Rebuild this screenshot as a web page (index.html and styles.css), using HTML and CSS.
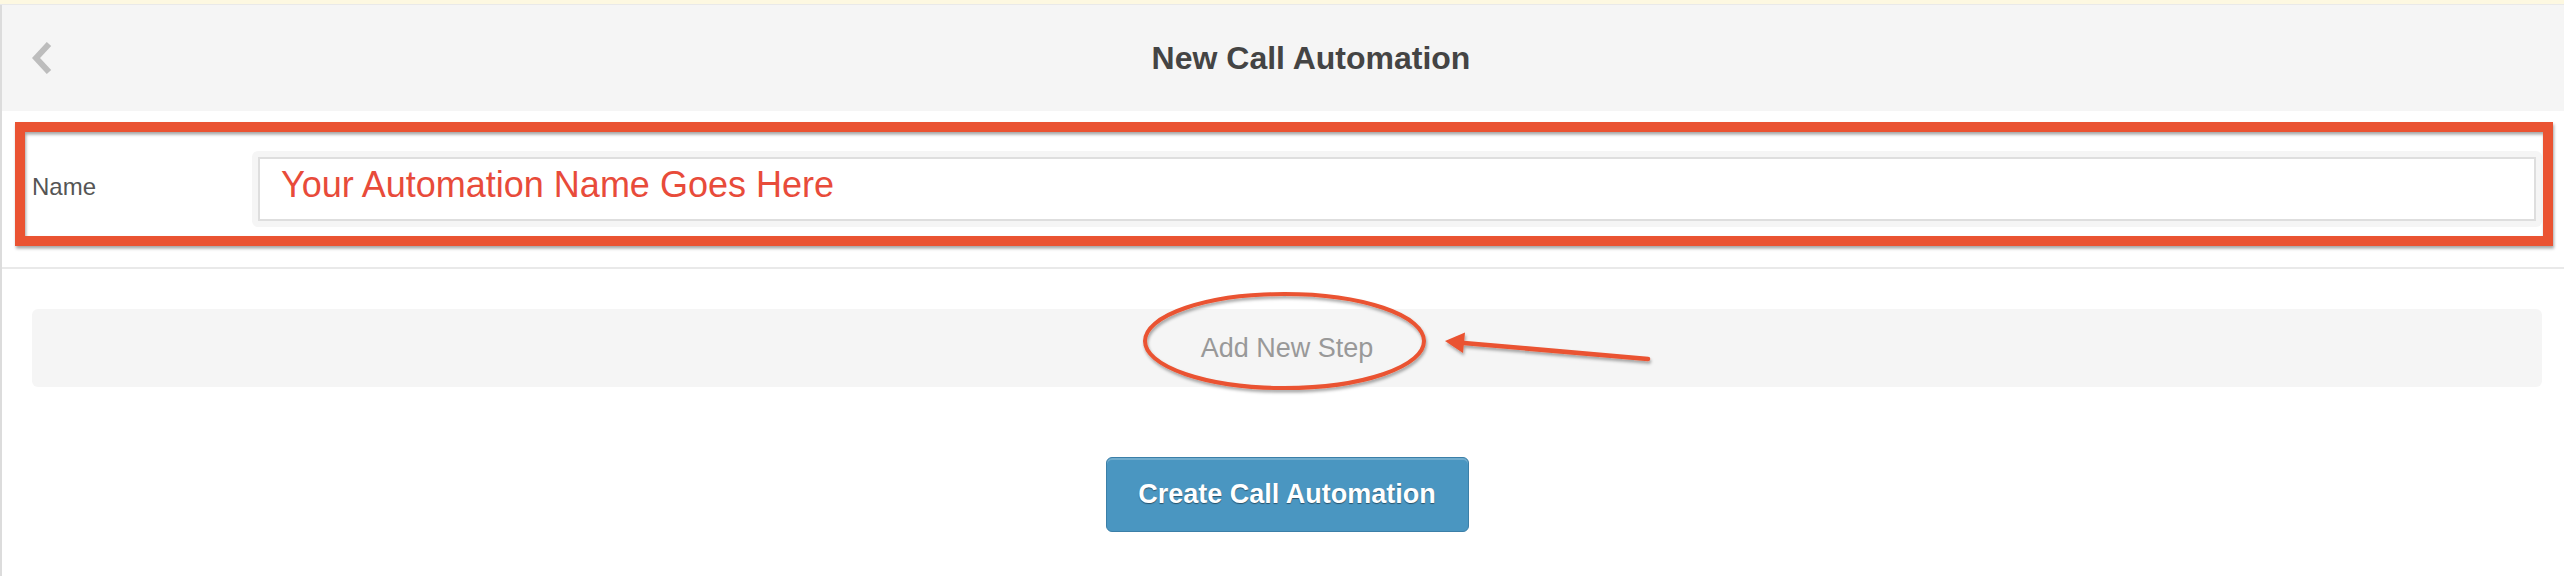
FILE: index.html
```html
<!DOCTYPE html>
<html lang="en">
<head>
<meta charset="utf-8">
<title>New Call Automation</title>
<link rel="stylesheet" href="styles.css">
</head>
<body>
<div class="page">
  <div class="notice"></div>
  <div class="app">
    <header class="bar">
      <a class="back" href="#" aria-label="Back">
        <svg class="chevron" width="20" height="32" viewBox="0 0 20 32"><path d="M17 2 L4 16 L17 30" fill="none" stroke="#bdbdbd" stroke-width="6"/></svg>
      </a>
      <h1 class="title">New Call Automation</h1>
    </header>
    <div class="form-row">
      <label class="label">Name</label>
      <div class="field">
        <div class="input">Your Automation Name Goes Here</div>
      </div>
    </div>
    <div class="content">
      <div class="step">Add New Step</div>
      <div class="actions">
        <button class="btn" type="button">Create Call Automation</button>
      </div>
    </div>
  </div>
  <svg class="annotations" width="2564" height="576" viewBox="0 0 2564 576">
    <defs>
      <filter id="sh" x="-5%" y="-30%" width="110%" height="160%">
        <feDropShadow dx="1" dy="2.5" stdDeviation="1.5" flood-color="#000" flood-opacity="0.35"/>
      </filter>
    </defs>
    <g filter="url(#sh)" stroke="#ea5330" fill="none">
      <rect x="20" y="127" width="2528" height="114" stroke-width="10"/>
      <ellipse cx="1284.5" cy="341" rx="139.5" ry="47" stroke-width="4"/>
      <line x1="1458" y1="342.5" x2="1648" y2="359" stroke-width="4.5" stroke-linecap="round"/>
      <polygon points="1445,341 1465,332.5 1463,353" fill="#ea5330" stroke="none"/>
    </g>
  </svg>
</div>
</body>
</html>
```

FILE: styles.css
```css
html, body {
  margin: 0;
  padding: 0;
}

body {
  font-family: "Liberation Sans", Arial, Helvetica, sans-serif;
  background: #ffffff;
  overflow: hidden;
}

.page {
  position: relative;
  width: 2564px;
  height: 576px;
  overflow: hidden;
}

.notice {
  height: 4px;
  background: #fdf8e1;
  border-bottom: 1px solid #e9e9e9;
}

.app {
  border-left: 2px solid #dcdcdc;
  height: 571px;
}

.bar {
  height: 106px;
  background: #f5f5f5;
  display: flex;
  align-items: center;
}

.back {
  width: 56px;
  flex: none;
  box-sizing: border-box;
  padding-left: 30px;
  display: flex;
  align-items: center;
}

.chevron {
  display: block;
}

.title {
  flex: 1;
  margin: 0;
  text-align: center;
  font-size: 32px;
  font-weight: bold;
  color: #444444;
}

.form-row {
  display: flex;
  align-items: center;
  padding: 40px 22px 40px 30px;
  border-bottom: 2px solid #e9e9e9;
}

.label {
  width: 220px;
  flex: none;
  font-size: 24px;
  color: #555555;
  padding-bottom: 4px;
}

.field {
  flex: 1;
  background: #f5f5f5;
  border-radius: 6px;
  padding: 6px;
}

.input {
  box-sizing: border-box;
  height: 64px;
  border: 2px solid #dedede;
  background: #ffffff;
  display: flex;
  align-items: center;
  padding: 0 20px 8px 21px;
  font-size: 36px;
  color: #e84b3a;
}

.content {
  padding: 40px 22px 0 30px;
}

.step {
  height: 78px;
  background: #f5f5f5;
  border-radius: 6px;
  display: flex;
  align-items: center;
  justify-content: center;
  font-size: 27px;
  color: #999999;
}

.actions {
  display: flex;
  justify-content: center;
  margin-top: 70px;
}

.btn {
  width: 363px;
  height: 75px;
  box-sizing: border-box;
  background: #4a96c1;
  border: 1px solid #3b7fa8;
  border-radius: 6px;
  box-shadow: inset 0 2px 0 rgba(255, 255, 255, 0.22);
  color: #ffffff;
  font-family: "Liberation Sans", Arial, Helvetica, sans-serif;
  font-size: 27px;
  font-weight: bold;
  text-shadow: 0 1px 1px rgba(0, 0, 0, 0.45);
  padding: 0;
}

.annotations {
  position: absolute;
  top: 0;
  left: 0;
  pointer-events: none;
}
```
